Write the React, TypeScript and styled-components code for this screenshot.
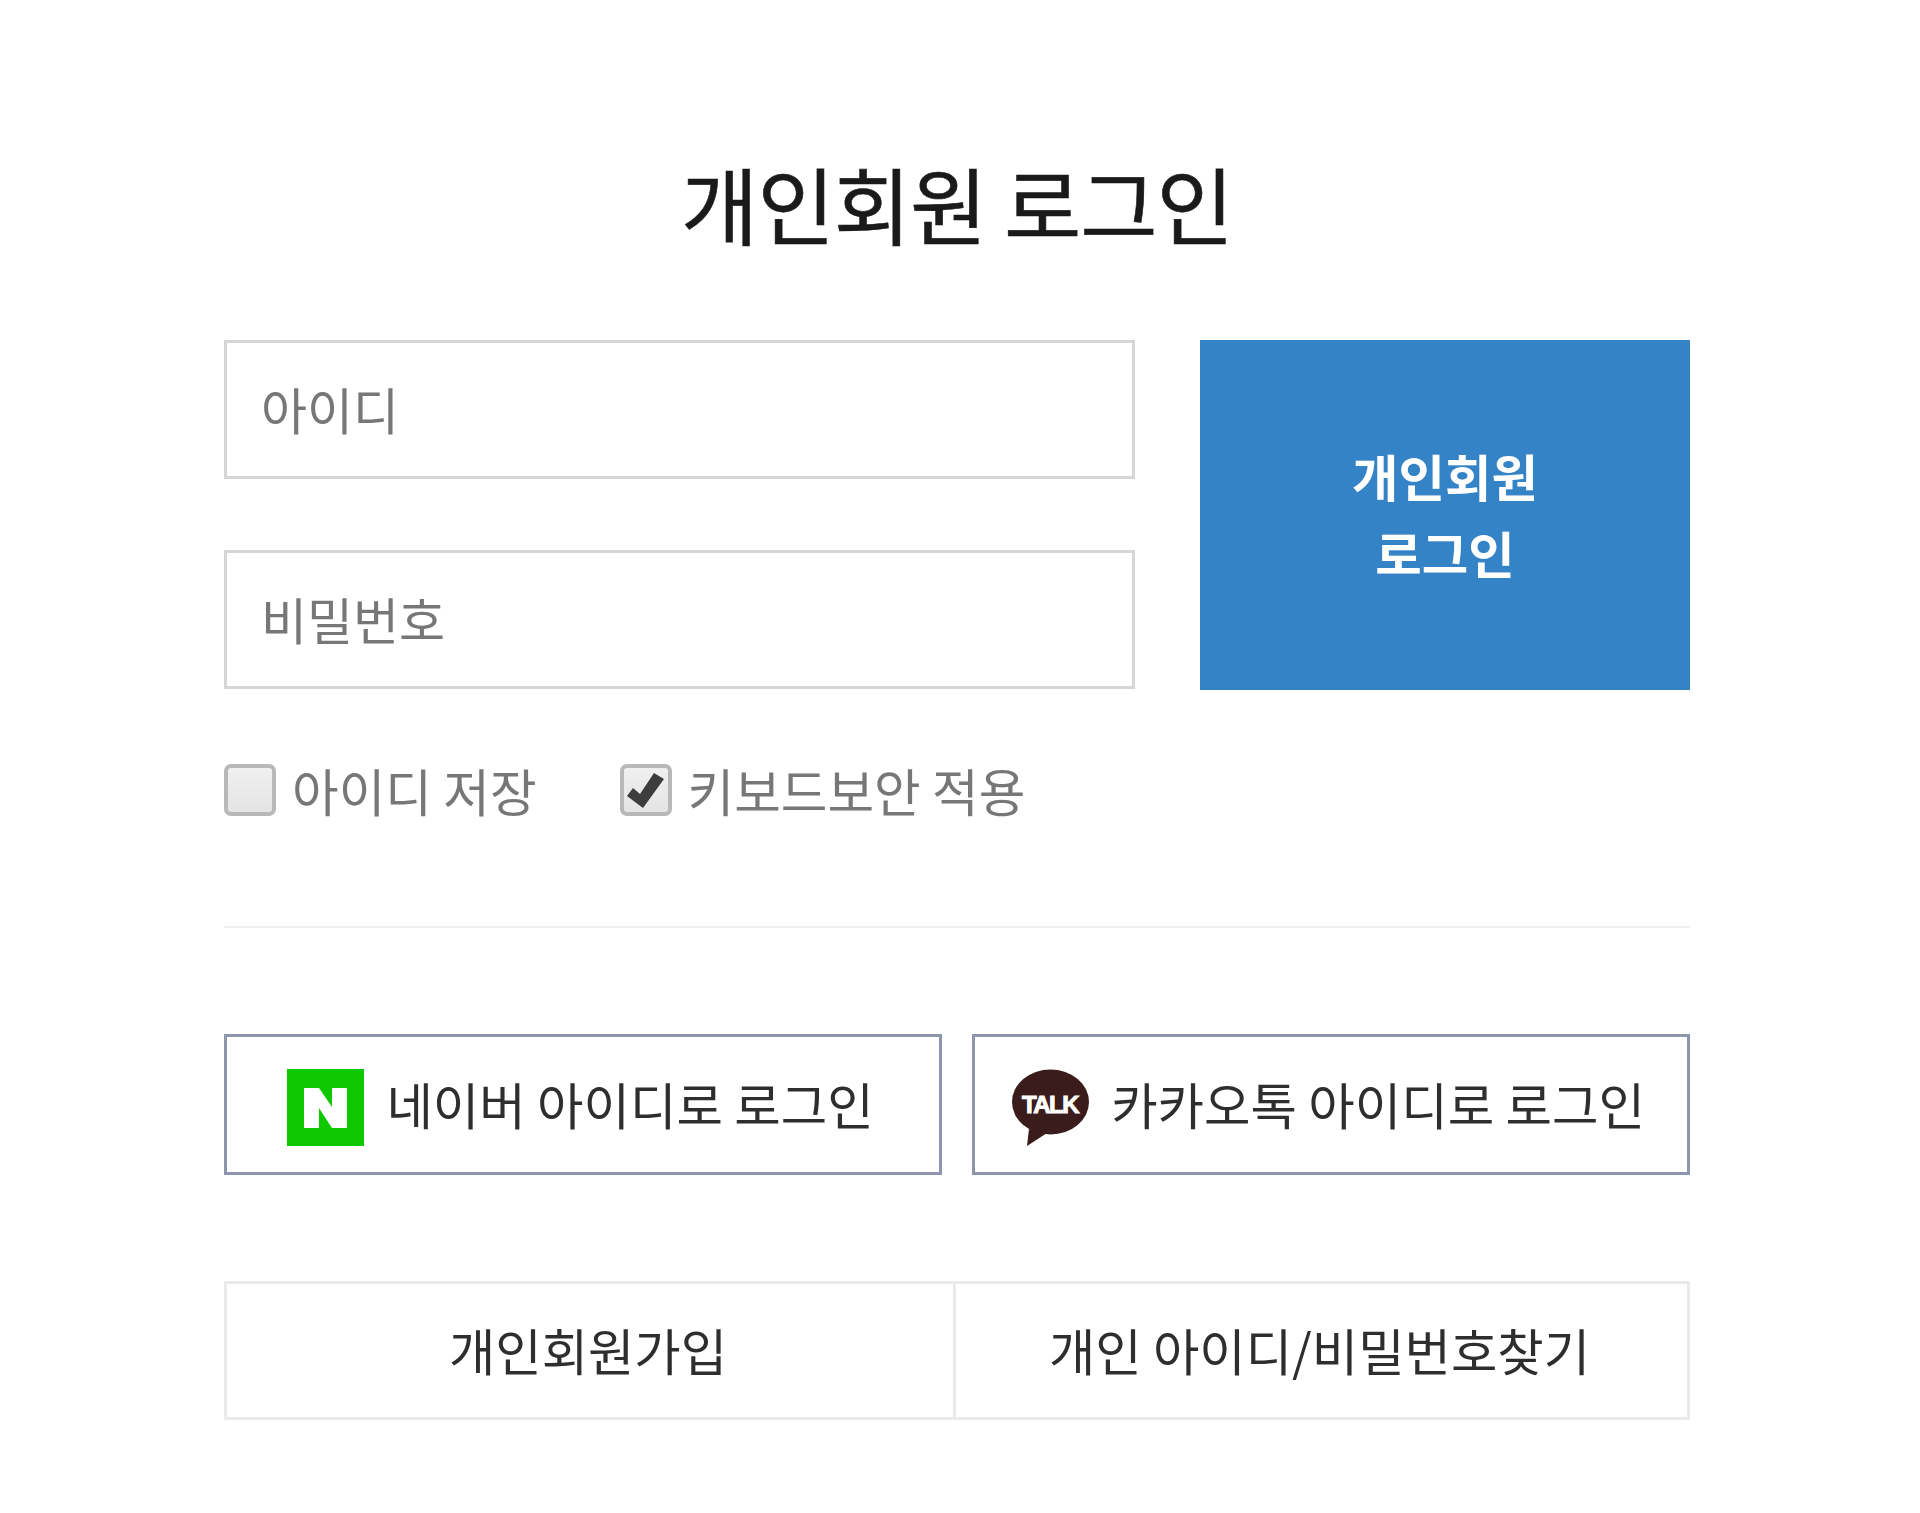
import React from 'react';
import styled, {createGlobalStyle} from 'styled-components';

const FONT = `"Noto Sans CJK KR", "Noto Sans", sans-serif`;

const GlobalStyle = createGlobalStyle`
    html, body {
        margin: 0;
        padding: 0;
        background: #ffffff;
    }
    * {
        box-sizing: border-box;
    }
`;

const Page = styled.div`
    width: 1920px;
    height: 1513px;
    padding: 138px 230px 0 224px;
    font-family: ${FONT};
`;

const Title = styled.h1`
    margin: 0 0 62px;
    height: 140px;
    font-size: 84px;
    line-height: 130px;
    font-weight: 400;
    letter-spacing: -1px;
    text-align: center;
    color: #1a1a1a;
    -webkit-text-stroke: 0.6px #1a1a1a;
`;

const FormRow = styled.form`
    display: flex;
    gap: 65px;
`;

const Fields = styled.div`
    width: 911px;
    display: flex;
    flex-direction: column;
    gap: 71px;
`;

const TextField = styled.input`
    display: block;
    width: 100%;
    height: 139px;
    padding: 0 34px 4px;
    border: 3px solid #d6d6d6;
    background: #fff;
    font-family: inherit;
    font-size: 50px;
    outline: 0;

    &::placeholder {
        color: #777;
        opacity: 1;
    }
`;

const SubmitButton = styled.button`
    width: 490px;
    height: 350px;
    border: 0;
    background: #3583c7;
    color: #fff;
    font-family: inherit;
    font-size: 50.5px;
    line-height: 77px;
    font-weight: 700;
    padding: 0 0 3px;
`;

const OptionRow = styled.div`
    display: flex;
    align-items: center;
    gap: 83px;
    margin-top: 74px;
    height: 52px;
`;

const Option = styled.label`
    display: flex;
    align-items: center;
    gap: 16px;
    font-size: 50.7px;
    color: #777;
`;

const CheckBox = styled.span`
    width: 52px;
    height: 52px;
    border: 4px solid #b8b8b8;
    border-radius: 7px;
    background: linear-gradient(#f0f0f0, #e4e4e4);
    display: flex;
    align-items: center;
    justify-content: center;
`;

const Divider = styled.hr`
    margin: 110px 0 0;
    border: 0;
    height: 2px;
    background: #eeeeee;
`;

const SocialRow = styled.div`
    display: flex;
    gap: 30px;
    margin-top: 106px;
`;

const SocialButton = styled.a`
    flex: 1;
    height: 141px;
    padding: 0 5px 4px 0;
    border: 3px solid #8e96ae;
    display: flex;
    align-items: center;
    justify-content: center;
    gap: 22px;
    font-size: 50.5px;
    color: #2e2e2e;

    & svg {
        margin-top: 10px;
    }
`;

const LinkRow = styled.div`
    display: flex;
    margin-top: 106px;
    height: 139px;
    border: 3px solid #eaeaea;
`;

const LinkItem = styled.a<{$width: number}>`
    width: ${props => props.$width}px;
    padding: 0 4px 2px 0;
    display: flex;
    align-items: center;
    justify-content: center;
    font-size: 50.4px;
    color: #2e2e2e;

    & + & {
        border-left: 3px solid #eaeaea;
    }
`;

const Check = () => (
    <svg width="37" height="35" viewBox="0 0 37 35">
        <path d="M0 23l6-8 7 6L27 0l10 6-21 29z" fill="#3d3d3d" />
    </svg>
);

const NaverIcon = () => (
    <svg width="77" height="77" viewBox="0 0 77 77">
        <rect width="77" height="77" fill="#10c800" />
        <path d="M17 19h15l13 19V19h15v40H45L32 39v20H17z" fill="#fff" />
    </svg>
);

const KakaoIcon = () => (
    <svg width="77" height="78" viewBox="0 0 77 78">
        <ellipse cx="38.5" cy="33" rx="38.5" ry="32.5" fill="#3a1c1c" />
        <path d="M17 60l-2 17 20-13z" fill="#3a1c1c" />
        <text x="38" y="43.5" textAnchor="middle" fontFamily="Liberation Sans" fontWeight="700" fontSize="24" letterSpacing="-1.5" fill="#fff" stroke="#fff" strokeWidth="1">TALK</text>
    </svg>
);

const App: React.FC = () => (
    <>
        <GlobalStyle />
        <Page>
            <Title>개인회원 로그인</Title>
            <FormRow>
                <Fields>
                    <TextField type="text" placeholder="아이디" />
                    <TextField type="password" placeholder="비밀번호" />
                </Fields>
                <SubmitButton type="button">개인회원<br />로그인</SubmitButton>
            </FormRow>
            <OptionRow>
                <Option><CheckBox />아이디 저장</Option>
                <Option><CheckBox><Check /></CheckBox>키보드보안 적용</Option>
            </OptionRow>
            <Divider />
            <SocialRow>
                <SocialButton><NaverIcon />네이버 아이디로 로그인</SocialButton>
                <SocialButton><KakaoIcon />카카오톡 아이디로 로그인</SocialButton>
            </SocialRow>
            <LinkRow>
                <LinkItem $width={726}>개인회원가입</LinkItem>
                <LinkItem $width={734}>개인 아이디/비밀번호찾기</LinkItem>
            </LinkRow>
        </Page>
    </>
);

export default App;
